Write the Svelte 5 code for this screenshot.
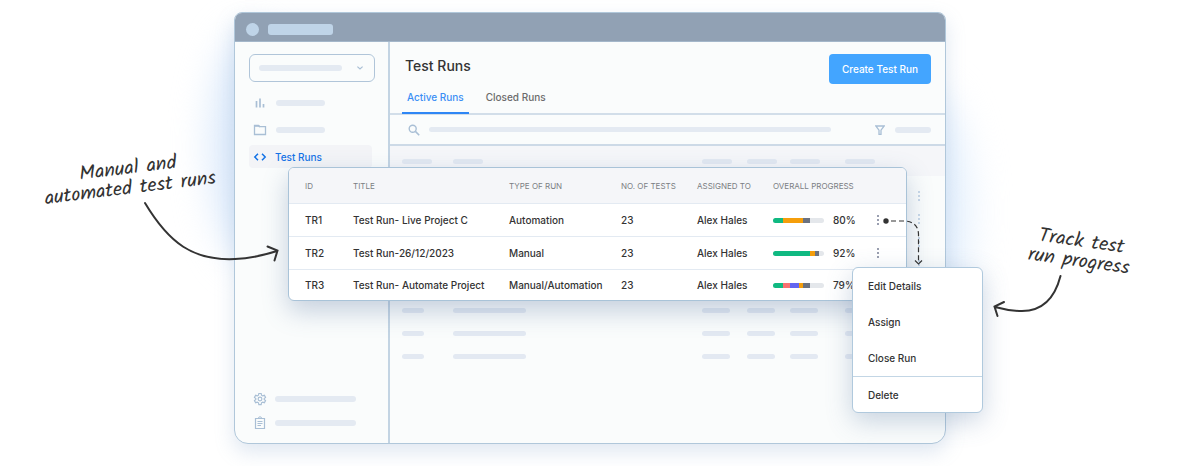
<script>
  let project = $state('');
  let query = $state('');
  let activeTab = $state('Active Runs');

  const tabs = ['Active Runs', 'Closed Runs'];
  const menuItems = ['Edit Details', 'Assign', 'Close Run', 'Delete'];

  const colors = {
    passed: '#10b981',
    failed: '#f87171',
    blocked: '#6366f1',
    retest: '#f59e0b',
    skipped: '#6b7280',
  };

  const runs = [
    {
      id: 'TR1',
      title: 'Test Run- Live Project C',
      type: 'Automation',
      tests: 23,
      assignee: 'Alex Hales',
      progress: 80,
      parts: [['passed', 20], ['retest', 38], ['skipped', 15]],
    },
    {
      id: 'TR2',
      title: 'Test Run-26/12/2023',
      type: 'Manual',
      tests: 23,
      assignee: 'Alex Hales',
      progress: 92,
      parts: [['passed', 73], ['retest', 10], ['skipped', 8]],
    },
    {
      id: 'TR3',
      title: 'Test Run- Automate Project',
      type: 'Manual/Automation',
      tests: 23,
      assignee: 'Alex Hales',
      progress: 79,
      parts: [['passed', 20], ['failed', 14], ['blocked', 18], ['retest', 6], ['skipped', 15]],
    },
  ];

  // Placeholder rows behind the card
  const ghostRows = Array.from({ length: 8 }, (_, i) => i);
</script>

{#snippet dots()}
  <svg class="dots" viewBox="0 0 4 12" width="4" height="12" aria-hidden="true">
    <rect x="1" y="1" width="2" height="2" />
    <rect x="1" y="5" width="2" height="2" />
    <rect x="1" y="9" width="2" height="2" />
  </svg>
{/snippet}

<div class="page">
  <div class="stage">
    <div class="window">
      <div class="titlebar">
        <span class="circle"></span>
        <span class="address"></span>
      </div>

      <div class="layout">
        <aside class="sidebar">
          <label class="picker">
            <span class="bar"></span>
            <svg viewBox="0 0 8 6" width="8" height="6" aria-hidden="true"><path d="M1.4 1.6 4 4l2.6-2.4" stroke-width="1.2" /></svg>
            <select bind:value={project} aria-label="Project">
              <option value=""></option>
            </select>
          </label>

          <nav class="nav">
            <a href="#dashboard" aria-label="Dashboard">
              <svg viewBox="0 0 14 14" width="14" height="14" aria-hidden="true">
                <path d="M3.500 5v6.500M7 2.500v9M10.500 8v3.500" stroke-width="1.700" />
              </svg>
              <span class="bar"></span>
            </a>
            <a href="#projects" aria-label="Projects">
              <svg viewBox="0 0 14 14" width="14" height="14" aria-hidden="true">
                <path d="M1.500 2.500h4l1.200 1.200h5.800v7.800h-11z" stroke-width="1.300" />
                <path d="M1.500 3h4.300l1 1" stroke-width="1.600" />
              </svg>
              <span class="bar"></span>
            </a>
            <a href="#runs" class="current">
              <svg viewBox="0 0 14 14" width="14" height="14" aria-hidden="true">
                <path d="M5 3.800 1.800 7 5 10.200M9 3.800 12.200 7 9 10.200" stroke-width="1.500" />
              </svg>
              Test Runs
            </a>
          </nav>

          <nav class="nav nav-bottom">
            <a href="#settings" aria-label="Settings">
              <svg viewBox="0 0 24 24" width="14" height="14" aria-hidden="true">
                <path
                  d="M10 2.500h4l.6 3 2 1.200 2.900-1 2 3.500-2.300 2v1.600l2.300 2-2 3.500-2.900-1-2 1.200-.6 3h-4l-.6-3-2-1.200-2.900 1-2-3.500 2.300-2v-1.600l-2.300-2 2-3.500 2.900 1 2-1.200z"
                  stroke-width="2"
                />
                <circle cx="12" cy="12" r="3.200" stroke-width="2" />
              </svg>
              <span class="bar"></span>
            </a>
            <a href="#docs" aria-label="Documents">
              <svg viewBox="0 0 14 14" width="14" height="14" aria-hidden="true">
                <path d="M2.500 2.500h9v10h-9z" stroke-width="1.200" />
                <path d="M5.500 2a1.500 1.200 0 0 1 3 0M4.500 5.500h5M4.500 7.500h5M4.500 9.500h3.500" stroke-width="1" />
              </svg>
              <span class="bar"></span>
            </a>
          </nav>
        </aside>

        <main class="main">
          <header class="head">
            <h1>Test Runs</h1>
            <button class="create">Create Test Run</button>
          </header>

          <div class="tabs" role="tablist">
            {#each tabs as tab}
              <button
                role="tab"
                class:active={activeTab === tab}
                aria-selected={activeTab === tab}
                onclick={() => (activeTab = tab)}
              >{tab}</button>
            {/each}
          </div>

          <div class="filters">
            <label class="search">
              <svg viewBox="0 0 12 12" width="12" height="12" aria-hidden="true">
                <circle cx="4.700" cy="4.700" r="3.500" stroke-width="1.400" />
                <path d="M7.400 7.400 11.200 11.200" stroke-width="1.600" />
              </svg>
              <input type="text" bind:value={query} aria-label="Search test runs" />
            </label>
            <button class="filter" aria-label="Filter">
              <svg viewBox="0 0 10 10" width="10" height="10" aria-hidden="true">
                <path d="M.8 1h8.400L6 5.200V9.500H4V5.200z" stroke-width="1.300" />
              </svg>
              <span class="bar"></span>
            </button>
          </div>

          <div class="ghost ghost-head">
            <i></i><i></i><i></i><i></i><i></i><i></i>
          </div>
          <div class="ghost-body">
            {#each ghostRows as row (row)}
              <div class="ghost">
                <i></i><i></i><i></i><i></i><i></i><i></i>
                {@render dots()}
              </div>
            {/each}
          </div>
        </main>
      </div>
    </div>

    <section class="card">
      <table>
        <colgroup>
          <col class="c-id" />
          <col class="c-title" />
          <col class="c-type" />
          <col class="c-tests" />
          <col class="c-assigned" />
          <col class="c-progress" />
          <col />
        </colgroup>
        <thead>
          <tr>
            <th>ID</th>
            <th>TITLE</th>
            <th>TYPE OF RUN</th>
            <th>NO. OF TESTS</th>
            <th>ASSIGNED TO</th>
            <th>OVERALL PROGRESS</th>
            <th></th>
          </tr>
        </thead>
        <tbody>
          {#each runs as run (run.id)}
            <tr>
              <td>{run.id}</td>
              <td>{run.title}</td>
              <td>{run.type}</td>
              <td>{run.tests}</td>
              <td>{run.assignee}</td>
              <td>
                <div class="progress">
                  <div class="track">
                    {#each run.parts as [kind, share]}
                      <span style="width: {share}%; background: {colors[kind]}"></span>
                    {/each}
                  </div>
                  {run.progress}%
                </div>
              </td>
              <td>
                <button class="more" aria-label="Actions for {run.id}">{@render dots()}</button>
              </td>
            </tr>
          {/each}
        </tbody>
      </table>
    </section>

    <svg class="connector" viewBox="0 0 46 50" width="46" height="50" aria-hidden="true">
      <circle cx="4" cy="5" r="2.700" />
      <path d="M9 5h14q13 1 13.500 13v29" stroke-dasharray="5 3" stroke-width="1.200" />
      <path d="M33 44.500 36.500 48 40 44.500" stroke-width="1.200" />
    </svg>

    <div class="menu" role="menu">
      {#each menuItems as item}
        <button role="menuitem">{item}</button>
      {/each}
    </div>

    <p class="note note-left">Manual and<br />automated test runs</p>
    <svg class="arrow arrow-left" viewBox="0 0 140 66" width="140" height="66" aria-hidden="true">
      <path d="M4 3C28 43 52 61 94 59 110 58.500 122 55.500 136 51M126.500 46.500 136.500 50.500 133.500 60.500" />
    </svg>

    <p class="note note-right">Track test<br />run progress</p>
    <svg class="arrow arrow-right" viewBox="0 0 74 46" width="74" height="46" aria-hidden="true">
      <path d="M69.500 3C63 28 50 38 31 38 21 38 13 36.500 4 34M13 29 3.500 33.500 6.500 43" />
    </svg>
  </div>
</div>

<style>
  :global(body) {
    margin: 0;
    background: #fff;
  }

  .page {
    padding: 12px 16px 22px;
    overflow: hidden;
    font-family: Inter, sans-serif;
    font-size: 10px;
    line-height: 16px;
    color: #333;
  }

  .stage {
    position: relative;
    isolation: isolate;
    max-width: 712px;
    margin: 0 auto;
  }

  /* soft blue haze on both sides of the window */
  .stage::before,
  .stage::after {
    content: '';
    position: absolute;
    z-index: -1;
    border-radius: 50%;
    filter: blur(18px);
  }

  .stage::before {
    top: 20px;
    left: -24px;
    width: 80px;
    height: 230px;
    background: #dceafb;
  }

  .stage::after {
    top: 80px;
    right: -24px;
    width: 80px;
    height: 240px;
    background: #e4f0fd;
  }

  button {
    padding: 0;
    border: 0;
    background: none;
    font: inherit;
    color: inherit;
    cursor: pointer;
  }

  svg {
    display: block;
    flex: none;
    fill: none;
    stroke: currentColor;
  }

  .bar {
    height: 6px;
    border-radius: 3px;
    background: #e4eaf2;
  }

  .window {
    overflow: hidden;
    border: 1px solid #b0c7da;
    border-radius: 8px 8px 14px 14px;
    background: #fafcfc;
    box-shadow: 0 8px 20px rgba(110, 145, 190, 0.22);
  }

  .titlebar {
    display: flex;
    align-items: center;
    gap: 9px;
    height: 28px;
    padding: 4px 11px 0;
    box-sizing: border-box;
    background: #91a1b4;
  }

  .circle {
    width: 13px;
    height: 13px;
    border-radius: 50%;
    background: #bfd4e8;
  }

  .address {
    width: 65px;
    height: 11px;
    border-radius: 3px;
    background: #bfd4e8;
  }

  .layout {
    display: flex;
    border-top: 1px solid #a4b7ca;
  }

  .sidebar {
    display: flex;
    flex-direction: column;
    flex: none;
    width: 155px;
    padding: 12px 13px 9px 14px;
    box-sizing: border-box;
    border-right: 2px solid #c3d4e3;
    color: #a9bfd5;
  }

  .picker {
    position: relative;
    display: flex;
    align-items: center;
    justify-content: space-between;
    height: 26px;
    padding: 0 10px 0 9px;
    border: 1px solid #b0c5d9;
    border-radius: 6px;
  }

  .picker .bar {
    width: 83px;
  }

  .picker select {
    position: absolute;
    inset: 0;
    width: 100%;
    border: 0;
    background: none;
    appearance: none;
  }

  .nav {
    display: flex;
    flex-direction: column;
    gap: 4px;
    padding-top: 9px;
  }

  .nav a {
    display: flex;
    align-items: center;
    gap: 9px;
    height: 23px;
    margin-right: 3px;
    padding-left: 4px;
    border-radius: 4px;
    color: inherit;
    text-decoration: none;
  }

  .nav .bar {
    width: 49px;
  }

  .nav a.current {
    gap: 8px;
    background: #f3f4f7;
    color: #1473e6;
    font-weight: 500;
  }

  .nav-bottom {
    gap: 1px;
    margin-top: auto;
    padding-top: 0;
  }

  .nav-bottom a {
    gap: 8px;
  }

  .nav-bottom .bar {
    width: 81px;
  }

  .main {
    flex: 1;
    min-width: 0;
    padding-bottom: 75px;
  }

  .head {
    display: flex;
    justify-content: space-between;
    align-items: flex-start;
    padding: 12px 14px 0 15px;
  }

  h1 {
    margin: 0;
    font-size: 14px;
    line-height: 24px;
    font-weight: 500;
  }

  .create {
    height: 30px;
    padding: 0 13px;
    border-radius: 4px;
    background: #43a5ff;
    color: #fff;
    font-weight: 500;
  }

  .tabs {
    display: flex;
    gap: 12px;
    padding: 0 12px;
    border-bottom: 2px solid #d2dee9;
  }

  .tabs button {
    height: 30px;
    margin-bottom: -1px;
    padding: 0 5px 2px;
    border-bottom: 2px solid transparent;
    color: #6b6b6b;
    font-weight: 500;
  }

  .tabs button.active {
    border-color: #2e86f5;
    color: #3a8ff5;
  }

  .filters {
    display: flex;
    align-items: center;
    gap: 44px;
    height: 29px;
    padding: 0 14px 0 18px;
    border-bottom: 2px solid #cddae7;
    color: #a9bfd5;
  }

  .search {
    display: flex;
    flex: 1;
    align-items: center;
    gap: 9px;
  }

  .search input {
    flex: 1;
    min-width: 0;
    height: 5px;
    padding: 0;
    border: 0;
    border-radius: 3px;
    background: #e4eaf2;
    outline: none;
  }

  .filter {
    display: flex;
    align-items: center;
    gap: 10px;
  }

  .filter .bar {
    width: 36px;
  }

  .ghost {
    display: grid;
    grid-template-columns: 51px 1fr 45px 43px 55px 72px 4px;
    align-items: center;
    height: 23px;
    padding: 0 24px 0 12px;
    color: #c9d8e8;
  }

  .ghost i {
    width: 28px;
    height: 5px;
    border-radius: 3px;
    background: #e3e9f2;
  }

  .ghost i:first-child {
    width: 22px;
  }

  .ghost i:nth-child(2) {
    width: 73px;
  }

  .ghost-head {
    height: 30px;
    background: #f5f6f9;
  }

  .ghost-head i:nth-child(n) {
    width: 30px;
  }

  .ghost-body {
    padding-top: 8px;
  }

  .dots {
    fill: currentColor;
    stroke: none;
  }

  .card {
    position: absolute;
    top: 155px;
    left: 54px;
    right: 39px;
    overflow: hidden;
    border: 1px solid #a9c3d8;
    border-radius: 6px;
    background: #fff;
    box-shadow: 0 10px 26px rgba(84, 116, 158, 0.32);
  }

  table {
    width: 100%;
    border-collapse: collapse;
    table-layout: fixed;
  }

  .c-id {
    width: 64px;
  }

  .c-title {
    width: 156px;
  }

  .c-type {
    width: 112px;
  }

  .c-tests,
  .c-assigned {
    width: 76px;
  }

  .c-progress {
    width: 97px;
  }

  th,
  td {
    padding: 0;
    text-align: left;
    white-space: nowrap;
    font-weight: 500;
  }

  th {
    height: 35px;
    background: #f5f6f9;
    color: #7b7e83;
    font-size: 8px;
    font-weight: 400;
  }

  td {
    height: 32px;
    border-top: 1px solid #e3eaf2;
  }

  tbody tr:last-child td {
    height: 30px;
  }

  th:first-child,
  td:first-child {
    padding-left: 16px;
  }

  .progress {
    display: flex;
    align-items: center;
    gap: 9px;
  }

  .track {
    display: flex;
    width: 51px;
    height: 5px;
    overflow: hidden;
    border-radius: 3px;
    background: #e4e7eb;
  }

  .more {
    display: block;
    padding: 4px 6px;
    color: #9a9fb0;
  }

  tbody tr:last-child .more {
    visibility: hidden;
  }

  .connector {
    position: absolute;
    top: 204px;
    left: 648px;
    color: #333;
  }

  .connector circle {
    fill: currentColor;
    stroke: none;
  }

  .menu {
    position: absolute;
    top: 255px;
    right: -37px;
    width: 129px;
    overflow: hidden;
    border: 1px solid #b0c9dd;
    border-radius: 6px;
    background: #fff;
    box-shadow: 0 8px 26px rgba(84, 116, 158, 0.3);
  }

  .menu button {
    display: block;
    width: 100%;
    height: 36px;
    padding: 0 15px;
    text-align: left;
    font-weight: 500;
  }

  .menu button:last-child {
    border-top: 1px solid #c3d6e5;
  }

  .note {
    position: absolute;
    margin: 0;
    font-family: Kalam, cursive;
    font-size: 20px;
    line-height: 20px;
    text-align: center;
    white-space: nowrap;
  }

  .note-left {
    top: 147px;
    right: 731px;
    transform: rotate(-7deg);
  }

  .note-right {
    top: 220px;
    left: 795px;
    transform: rotate(8deg);
  }

  .arrow {
    position: absolute;
    color: #333;
    stroke-width: 2;
    stroke-linecap: round;
  }

  .arrow-left {
    top: 188px;
    left: -93px;
  }

  .arrow-right {
    top: 261px;
    left: 757px;
  }
</style>
